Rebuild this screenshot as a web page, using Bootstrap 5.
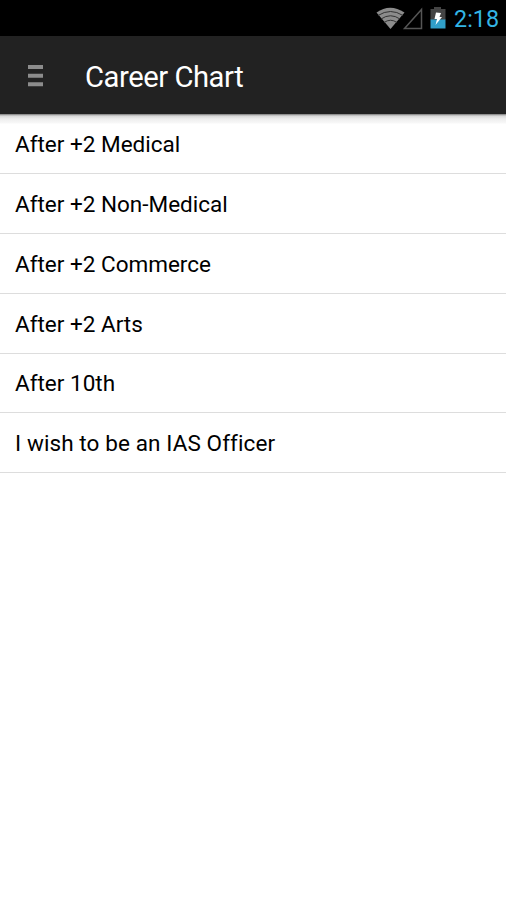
<!DOCTYPE html>
<html lang="en">
<head>
<meta charset="utf-8">
<meta name="viewport" content="width=device-width, initial-scale=1">
<title>Career Chart</title>
<link href="https://cdn.jsdelivr.net/npm/bootstrap@5.3.0/dist/css/bootstrap.min.css" rel="stylesheet">
<style>
body{font-family:Roboto,sans-serif;color:#000;background:#fff;min-height:900px}
.status-bar{height:36px;background:#000;color:#33b5e5;padding-right:7px}
.clock{font-size:23.3px;line-height:36px;padding-top:1px;white-space:nowrap}
.app-bar{height:78px;background:#222}
.app-title{font-size:29.2px;font-weight:400;line-height:34px;color:#fff;white-space:nowrap;margin-left:14px;padding-top:3px}
.title-text{letter-spacing:-.45px}
.row-text{padding-top:1px;white-space:nowrap}
.career-list{border-radius:0;padding-top:.4px;background:linear-gradient(#777 0,#aaa 1px,#d8d8d8 2px,#eee 5px,#f8f8f8 9px,#fff 10px)}
.career-item{height:59.8px;padding:0 15px;background:transparent;border:0;border-bottom:1.5px solid #ddd!important;color:#000;font-size:22.5px;line-height:30px}
.career-item:last-child .row-text{letter-spacing:.1px;font-variant-ligatures:common-ligatures}
.menu-btn{width:71px;height:78px;line-height:1;padding-top:2px}
</style>
</head>
<body>
<header>
<div class="status-bar d-flex align-items-center justify-content-end">
<svg width="80" height="36" viewBox="374 0 80 36" aria-hidden="true">
<path d="M376.5 12.5Q390 3 404.5 12.5L390.5 29Z" fill="#8c8c8c"/>
<path d="M378 15.5Q390.500 7.500 403 15.500M381 19Q390.500 12.500 400 19M384 22.500Q390.500 18 397 22.500" fill="none" stroke="#333" stroke-width="1"/>
<path d="M404.500 28.500H421.500V9.500Z" fill="none" stroke="#555" stroke-width="1.500"/>
<path d="M430.500 9h3.500V7h7v2h4.500v11h-15z" fill="#444"/>
<path d="M430.500 19.500h15V28.500h-15z" fill="#309fc9"/>
<path d="M436 12.500l5 .5-1.500 4h2.500l-6.500 8 1.500-6h-2.500z" fill="#fff"/>
</svg>
<div class="clock">2:18</div>
</div>
<nav class="app-bar d-flex align-items-center">
<button class="menu-btn btn px-0 pb-0 border-0 rounded-0 d-flex align-items-center justify-content-center" aria-label="Menu"><svg width="15" height="22" viewBox="0 0 15 22"><path d="M0 2h15M0 10.700h15M0 19.300h15" stroke="#8c8c8c" stroke-width="4"/></svg></button>
<h1 class="app-title mb-0"><span class="title-text">Career Chart</span></h1>
</nav>
</header>
<main class="career-list list-group list-group-flush">
<a class="career-item list-group-item d-flex align-items-center"><span class="row-text">After +2 Medical</span></a>
<a class="career-item list-group-item d-flex align-items-center"><span class="row-text">After +2 Non-Medical</span></a>
<a class="career-item list-group-item d-flex align-items-center"><span class="row-text">After +2 Commerce</span></a>
<a class="career-item list-group-item d-flex align-items-center"><span class="row-text">After +2 Arts</span></a>
<a class="career-item list-group-item d-flex align-items-center"><span class="row-text">After 10th</span></a>
<a class="career-item list-group-item d-flex align-items-center"><span class="row-text">I wish to be an IAS Officer</span></a>
</main>
<script src="https://cdn.jsdelivr.net/npm/bootstrap@5.3.0/dist/js/bootstrap.bundle.min.js"></script>
</body>
</html>
